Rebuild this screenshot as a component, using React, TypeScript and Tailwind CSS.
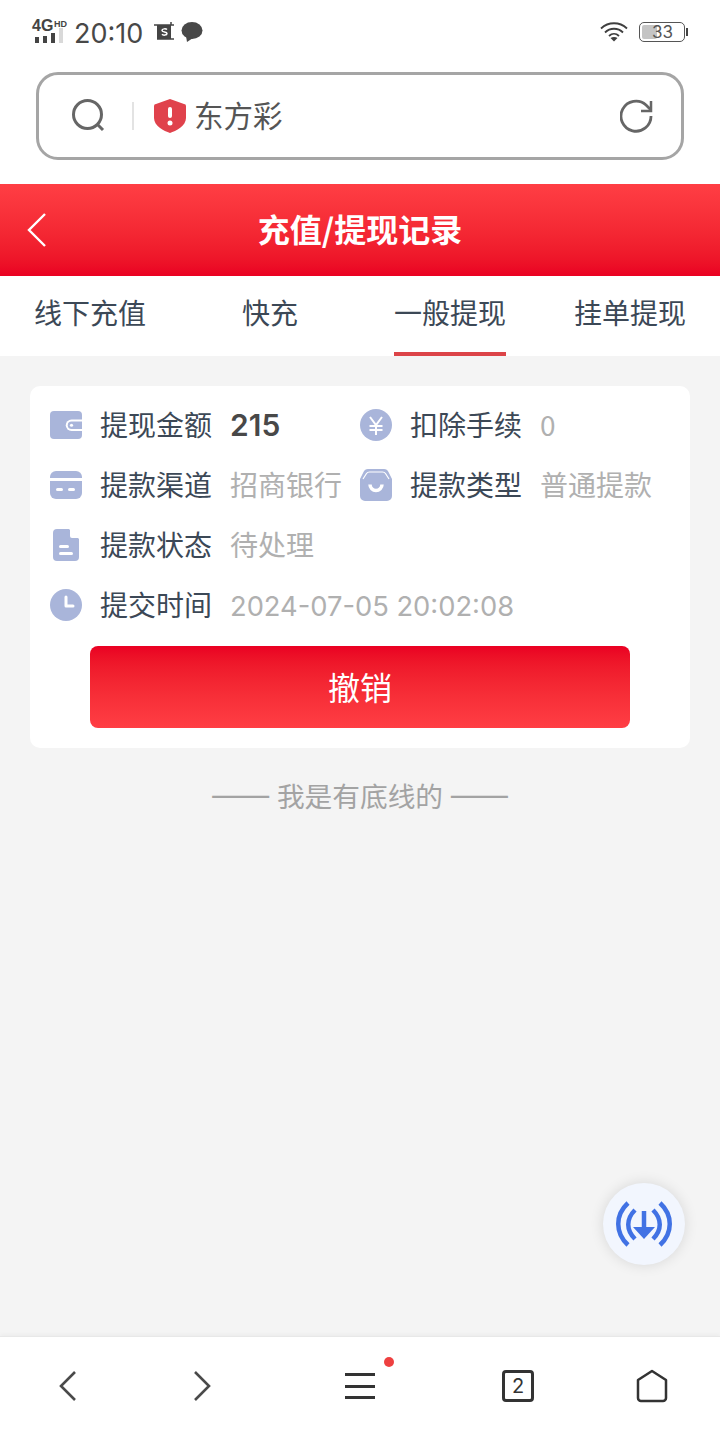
const FONT = "font-['Noto_Sans_CJK_SC','Noto_Sans',sans-serif]";

const WalletIcon = () => (
  <svg width="32" height="28" viewBox="0 0 32 28">
    <rect width="32" height="28" rx="4" fill="#a9b5da" />
    <path d="M32 8.500H21.500a5.750 5.750 0 0 0 0 11.500H32z" fill="#fff" />
    <path d="M32 10.500H21.500a3.750 3.750 0 0 0 0 7.500H32z" fill="#a9b5da" />
    <circle cx="21.500" cy="14.250" r="1.600" fill="#fff" />
  </svg>
);

const YenIcon = () => (
  <svg width="32" height="32" viewBox="0 0 32 32">
    <circle cx="16" cy="16" r="16" fill="#a9b5da" />
    <path d="M10 8l6 8 6-8M9.500 17h13M9.500 21h13M16 16v10" fill="none" stroke="#fff" strokeWidth="2" />
  </svg>
);

const CardIcon = () => (
  <svg width="32" height="28" viewBox="0 0 32 28">
    <rect width="32" height="28" rx="6" fill="#a9b5da" />
    <rect y="7" width="32" height="3" fill="#fff" />
    <rect x="6" y="17" width="7" height="3" rx="1.500" fill="#fff" />
    <rect x="18" y="17" width="7" height="3" rx="1.500" fill="#fff" />
  </svg>
);

const BagIcon = () => (
  <svg width="32" height="32" viewBox="0 0 32 32">
    <path d="M8 0h16a5 5 0 0 1 4.500 3L32 10v17a5 5 0 0 1-5 5H5a5 5 0 0 1-5-5V10l3.500-7A5 5 0 0 1 8 0z" fill="#a9b5da" />
    <path d="M3 10L6.500 4.500Q7.500 3 9.500 3H22.500Q24.500 3 25.500 4.500L29 10" fill="none" stroke="#fff" strokeWidth="1.200" />
    <path d="M10 15.500a6 6 0 0 0 12 0" fill="none" stroke="#fff" strokeWidth="3.500" />
  </svg>
);

const FileIcon = () => (
  <svg width="26" height="32" viewBox="0 0 26 32">
    <path d="M4 0h12l10 10v18a4 4 0 0 1-4 4H4a4 4 0 0 1-4-4V4a4 4 0 0 1 4-4z" fill="#a9b5da" />
    <path d="M17 0l9 9h-7a2 2 0 0 1-2-2z" fill="#fff" />
    <rect x="6" y="16" width="10" height="3" rx="1.500" fill="#fff" />
    <rect x="6" y="23" width="14" height="3" rx="1.500" fill="#fff" />
  </svg>
);

const ClockIcon = () => (
  <svg width="32" height="32" viewBox="0 0 32 32">
    <circle cx="16" cy="16" r="16" fill="#a9b5da" />
    <path d="M16 8v9h7" fill="none" stroke="#fff" strokeWidth="3" strokeLinecap="round" strokeLinejoin="round" />
  </svg>
);

// 4G / signal block at the left of the status bar
const SignalIcon = () => (
  <div className="relative h-[28px] w-[34px]">
    <span className="absolute left-0 top-[-3px] font-['Liberation_Sans',sans-serif] text-[16px] font-bold leading-[20px] text-[#444]">
      4G
    </span>
    <span className="absolute left-[22px] top-0 font-['Liberation_Sans',sans-serif] text-[9px] font-bold leading-[10px] text-[#444]">
      HD
    </span>
    <div className="absolute left-[3px] top-[9px] flex items-end gap-[4px]">
      <div className="h-[6px] w-[4px] bg-[#444]" />
      <div className="h-[7px] w-[4px] bg-[#444]" />
      <div className="h-[10px] w-[4px] bg-[#444]" />
      <div className="h-[15px] w-[4px] bg-[#d9d9d9]" />
    </div>
  </div>
);

const StatusBar = () => (
  <div className="flex h-[60px] items-center justify-between pl-[32px] pr-[35px] pt-[6px]">
    <div className="flex items-center">
      <SignalIcon />
      <span className="ml-[8px] font-['Inter',sans-serif] text-[27px] leading-none text-[#484848]">
        20:10
      </span>
      <svg className="ml-[11px] -mt-[2px]" width="20" height="20" viewBox="0 0 20 20">
        <rect x="3" y="3" width="14" height="14" fill="#444" />
        <path d="M0 3h20M17 0v3M3 17h17" stroke="#444" strokeWidth="1.500" />
        <path d="M13 7.500c-1-1-5-1-5 1s5 1 5 3-4 2-5 .8" fill="none" stroke="#fff" strokeWidth="1.500" />
      </svg>
      <svg className="ml-[7px] -mt-[2px]" width="22" height="20" viewBox="0 0 22 20">
        <ellipse cx="11" cy="8.500" rx="10.500" ry="8.500" fill="#484848" />
        <path d="M5 14l1 6 6-4z" fill="#484848" />
      </svg>
    </div>
    <div className="-mt-[3px] flex items-center">
      <svg width="28" height="21" viewBox="0 0 28 21" fill="none" stroke="#3f3f3f" strokeWidth="1.800">
        <path d="M1 7.500C8.500.5 19.500.5 27 7.500" />
        <path d="M5 11.500c5-5 13-5 18 0" />
        <path d="M9 15c3-2.800 7-2.800 10 0" />
        <path d="M14 20.500l-3.500-3.500c2-1.300 5-1.300 7 0z" fill="#3f3f3f" stroke="none" />
      </svg>
      <div className="relative ml-[11px] flex h-[20px] w-[46px] items-center rounded-[5px] border border-[#555] p-[2px]">
        <div className="h-full w-[15px] rounded-[2px] bg-[#c4c4c4]" />
        <span className="absolute left-[12px] top-0 font-['Inter',sans-serif] text-[17px] leading-[18px] text-[#555]">
          33
        </span>
        <div className="absolute right-[-4px] top-[5px] h-[8px] w-[2px] bg-[#444]" />
      </div>
    </div>
  </div>
);

const SearchBar = () => (
  <div className="mx-[36px] mt-[12px] flex h-[88px] items-center rounded-[22px] border-[3px] border-[#a5a5a5] pl-[33px] pr-[28px]">
    <svg width="34" height="34" viewBox="0 0 34 34" fill="none" stroke="#666" strokeWidth="3">
      <circle cx="15.500" cy="15.500" r="14" />
      <path d="M25 25l6 6" />
    </svg>
    <div className="ml-[26px] h-[28px] w-[2px] bg-[#e3e3e3]" />
    <svg className="ml-[20px]" width="32" height="34" viewBox="0 0 32 34">
      <path d="M16 0l14 5a2 2 0 0 1 2 2v12c0 8-10 13-16 15C10 32 0 27 0 19V7a2 2 0 0 1 2-2z" fill="#e0424c" />
      <rect x="14" y="8" width="4" height="11" rx="2" fill="#fff" />
      <circle cx="16" cy="24" r="2.500" fill="#fff" />
    </svg>
    <span className={`${FONT} ml-[8px] pb-[2px] text-[29.500px] leading-none text-[#555]`}>东方彩</span>
    <svg className="ml-auto" width="33" height="34" viewBox="0 0 33 34" fill="none" stroke="#666" strokeWidth="2.800">
      <path d="M31 17A15 15 0 1 1 26 6L31 11" />
      <path d="M31 2v10H21" strokeWidth="2.500" />
    </svg>
  </div>
);

const Header = () => (
  <div className="relative mt-[24px] flex h-[92px] items-center justify-center bg-gradient-to-b from-[#ff3e44] to-[#ea0022] pb-[4px]">
    <svg className="absolute left-[26px] top-[29px]" width="22" height="34" viewBox="0 0 22 34" fill="none" stroke="#fff" strokeWidth="2.400">
      <path d="M19 1L3 17l16 16" />
    </svg>
    <span className={`${FONT} text-[32px] font-bold text-white`}>充值/提现记录</span>
  </div>
);

const TABS = ["线下充值", "快充", "一般提现", "挂单提现"];

const Tabs = () => (
  <div className="grid h-[80px] grid-cols-4 bg-white">
    {TABS.map((tab, i) => (
      <div key={tab} className="relative flex items-center justify-center pb-[9px]">
        <span className={`${FONT} text-[28px] text-[#3c4856]`}>{tab}</span>
        {i === 2 && <div className="absolute bottom-0 left-[34px] h-[4px] w-[112px] bg-[#dc4448]" />}
      </div>
    ))}
  </div>
);

const Label = ({ children }: { children: string }) => (
  <span className={`${FONT} w-[130px] shrink-0 pb-[2px] text-[28px] leading-none text-[#3c4856]`}>{children}</span>
);

const Value = ({ children }: { children: string }) => (
  <span className={`${FONT} pb-[2px] text-[28px] leading-none whitespace-nowrap text-[#b0b0b0]`}>{children}</span>
);

const IconBox = ({ children }: { children: React.ReactNode }) => (
  <div className="flex w-[50px] shrink-0 justify-start">
    <div className="flex w-[32px] justify-center">{children}</div>
  </div>
);

const RecordCard = () => (
  <div className="rounded-[10px] bg-white px-[20px] pt-[9px] pb-[20px]">
    <div className="grid h-[60px] grid-cols-[310px_1fr] items-center">
      <div className="flex items-center">
        <IconBox><WalletIcon /></IconBox>
        <Label>提现金额</Label>
        <span className="font-['Inter',sans-serif] text-[30px] font-semibold leading-none text-[#484848]">215</span>
      </div>
      <div className="flex items-center">
        <IconBox><YenIcon /></IconBox>
        <Label>扣除手续</Label>
        <Value>0</Value>
      </div>
    </div>
    <div className="grid h-[60px] grid-cols-[310px_1fr] items-center">
      <div className="flex items-center">
        <IconBox><CardIcon /></IconBox>
        <Label>提款渠道</Label>
        <Value>招商银行</Value>
      </div>
      <div className="flex items-center">
        <IconBox><BagIcon /></IconBox>
        <Label>提款类型</Label>
        <Value>普通提款</Value>
      </div>
    </div>
    <div className="flex h-[60px] items-center">
      <IconBox><FileIcon /></IconBox>
      <Label>提款状态</Label>
      <Value>待处理</Value>
    </div>
    <div className="flex h-[60px] items-center">
      <IconBox><ClockIcon /></IconBox>
      <Label>提交时间</Label>
      <span className="pt-[4px] font-['Inter',sans-serif] text-[27.300px] leading-none text-[#b0b0b0]">2024-07-05 20:02:08</span>
    </div>
    <button className={`${FONT} mx-[40px] mt-[11px] flex h-[82px] w-[540px] items-center justify-center rounded-[8px] bg-gradient-to-b from-[#ea0022] to-[#ff3e44] pb-[2px] text-[32px] text-white`}>
      撤销
    </button>
  </div>
);

const BottomBar = () => (
  <div className="grid h-[100px] grid-cols-[136px_132px_184px_132px_136px] items-center border-t border-[#e8e8e8] bg-white shadow-[0_-2px_4px_rgba(0,0,0,0.03)] pb-[1px]">
    <svg className="justify-self-center" width="18" height="32" viewBox="0 0 18 32" fill="none" stroke="#4a4a4a" strokeWidth="2.600">
      <path d="M16 2L2 16l14 14" />
    </svg>
    <svg className="justify-self-center" width="18" height="32" viewBox="0 0 18 32" fill="none" stroke="#4a4a4a" strokeWidth="2.600">
      <path d="M2 2l14 14L2 30" />
    </svg>
    <div className="relative h-[26px] w-[30px] justify-self-center">
      <div className="flex h-full flex-col justify-between">
        <div className="h-[3px] bg-[#333]" />
        <div className="h-[3px] bg-[#333]" />
        <div className="h-[3px] bg-[#333]" />
      </div>
      <div className="absolute right-[-19px] top-[-16px] h-[10px] w-[10px] rounded-full bg-[#ee4040]" />
    </div>
    <div className="flex h-[32px] w-[32px] items-center justify-center justify-self-center rounded-[4px] border-[3px] border-[#333] font-['Inter',sans-serif] text-[20px] text-[#333]">
      2
    </div>
    <svg className="justify-self-center" width="32" height="34" viewBox="0 0 32 34" fill="none" stroke="#333" strokeWidth="2.500" strokeLinejoin="round">
      <path d="M16 2L30 11v18a3 3 0 0 1-3 3H5a3 3 0 0 1-3-3V11z" />
    </svg>
  </div>
);

// floating download shortcut above the toolbar
const DownloadFab = () => (
  <div className="absolute right-[35px] top-[1183px] flex h-[82px] w-[82px] items-center justify-center rounded-full bg-[#f2f6fe] shadow-[0_0_14px_rgba(0,0,0,0.12)]">
    <svg width="56" height="46" viewBox="0 0 56 46" fill="none" stroke="#4172e4" strokeWidth="4.500">
      <path d="M12 2C-1 14-1 32 12 44" />
      <path d="M44 2c13 12 13 30 0 42" />
      <path d="M19 9c-9 9-9 20 0 29" />
      <path d="M37 9c9 9 9 20 0 29" />
      <path d="M28 10v20" />
      <path d="M17 26h22L28 38z" fill="#4172e4" stroke="none" />
    </svg>
  </div>
);

export default function App() {
  return (
    <div className="relative flex h-[1436px] w-[720px] flex-col overflow-hidden bg-white">
      <StatusBar />
      <SearchBar />
      <Header />
      <Tabs />
      <div className="flex-1 bg-[#f4f4f4] px-[30px] pt-[30px]">
        <RecordCard />
        <div className={`${FONT} mt-[25px] pb-[2px] text-center text-[27.700px] leading-[36px] text-[#a3a3a3]`}>
          <span className="text-[36px] leading-none">——</span> 我是有底线的 <span className="text-[36px] leading-none">——</span>
        </div>
      </div>
      <BottomBar />
      <DownloadFab />
    </div>
  );
}
